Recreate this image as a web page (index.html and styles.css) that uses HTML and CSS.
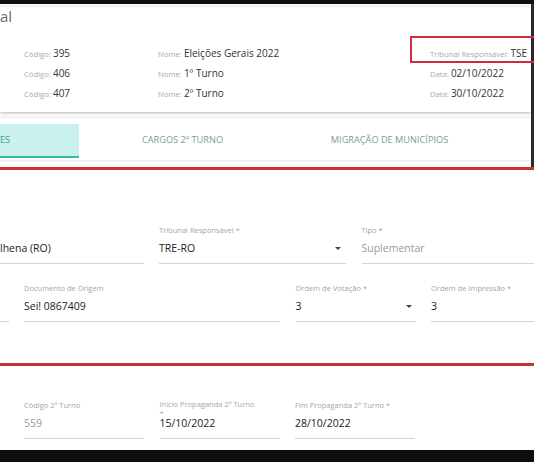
FILE: index.html
```html
<!DOCTYPE html>
<html lang="pt-BR">
<head>
<meta charset="utf-8">
<title>Eleição</title>
<link rel="stylesheet" href="styles.css">
</head>
<body>
<div class="screen">
  <header class="top">
    <section class="summary">
      <h1 class="title">al</h1>
      <div class="srows">
        <div class="srow">
          <div class="sitem"><span class="sl">Código:</span><span class="sv">395</span></div>
          <div class="sitem"><span class="sl">Nome:</span><span class="sv">Eleições Gerais 2022</span></div>
          <div class="sitem marked"><span class="sl">Tribunal Responsável:</span><span class="sv">TSE</span></div>
        </div>
        <div class="srow">
          <div class="sitem"><span class="sl">Código:</span><span class="sv">406</span></div>
          <div class="sitem"><span class="sl">Nome:</span><span class="sv">1º Turno</span></div>
          <div class="sitem"><span class="sl">Data:</span><span class="sv">02/10/2022</span></div>
        </div>
        <div class="srow">
          <div class="sitem"><span class="sl">Código:</span><span class="sv">407</span></div>
          <div class="sitem"><span class="sl">Nome:</span><span class="sv">2º Turno</span></div>
          <div class="sitem"><span class="sl">Data:</span><span class="sv">30/10/2022</span></div>
        </div>
      </div>
    </section>
    <nav class="tabs">
      <div class="tab tab-first active">ES</div>
      <div class="tab">CARGOS 2º TURNO</div>
      <div class="tab">MIGRAÇÃO DE MUNICÍPIOS</div>
    </nav>
  </header>

  <section class="form-box">
    <div class="frow">
      <div class="field w-143">
        <span class="flabel"></span>
        <div class="fvalue">lhena (RO)</div>
      </div>
      <div class="field w-187">
        <span class="flabel">Tribunal Responsável *</span>
        <div class="fvalue">TRE-RO<span class="caret"></span></div>
      </div>
      <div class="field w-200">
        <span class="flabel">Tipo *</span>
        <div class="fvalue muted">Suplementar</div>
      </div>
    </div>
    <div class="frow">
      <div class="field w-8">
        <span class="flabel"></span>
        <div class="fvalue"></div>
      </div>
      <div class="field w-256">
        <span class="flabel">Documento de Origem</span>
        <div class="fvalue">Sei! 0867409</div>
      </div>
      <div class="field w-120">
        <span class="flabel">Ordem de Votação *</span>
        <div class="fvalue">3<span class="caret caret-tight"></span></div>
      </div>
      <div class="field w-120">
        <span class="flabel">Ordem de Impressão *</span>
        <div class="fvalue">3</div>
      </div>
    </div>
  </section>

  <section class="form-plain">
    <div class="frow">
      <div class="field w-120">
        <span class="flabel">Código 2º Turno</span>
        <div class="fvalue muted">559</div>
      </div>
      <div class="field w-120">
        <span class="flabel wrap">Início Propaganda 2º Turno<br>*</span>
        <div class="fvalue">15/10/2022</div>
      </div>
      <div class="field w-120">
        <span class="flabel">Fim Propaganda 2º Turno *</span>
        <div class="fvalue">28/10/2022</div>
      </div>
    </div>
  </section>
</div>
</body>
</html>
```
FILE: styles.css
```css
* {
  box-sizing: border-box;
  margin: 0;
  padding: 0;
}

body {
  margin: 0;
  width: 534px;
  height: 462px;
  overflow: hidden;
  background: #ffffff;
  font-family: "Open Sans", "Liberation Sans", sans-serif;
}

.screen {
  height: 462px;
  border-top: 4px solid #0e0e0e;
  border-bottom: 12px solid #0e0e0e;
  overflow: hidden;
  display: flex;
  flex-direction: column;
}

.top {
  border-right: 3px solid #2b2b2b;
  padding-bottom: 7px;
}

/* summary card */
.summary {
  margin-top: 2px;
  border-top: 1px solid #ececec;
  padding-bottom: 9px;
  box-shadow: 0 1px 3px rgba(0, 0, 0, 0.3);
  background: #fff;
}

.title {
  font-size: 15px;
  line-height: 18px;
  font-weight: 400;
  color: #6a6a6a;
}

.srows {
  margin-top: 18px;
  padding-left: 24px;
}

.srow {
  display: grid;
  grid-template-columns: 134px 272px 1fr;
  height: 20px;
}

.sitem {
  font-size: 10px;
  line-height: 20px;
  white-space: nowrap;
}

.sl {
  font-size: 7.7px;
  line-height: 1;
  color: #a9a9a9;
  margin-right: 2px;
}

.sv {
  font-size: 10px;
  line-height: 1;
  color: #333333;
}

.marked {
  position: relative;
}

.marked::after {
  content: "";
  position: absolute;
  left: -20px;
  right: -12px;
  top: -7px;
  bottom: 0;
  border: 2px solid #cc2f39;
}

/* tabs */
.tabs {
  margin-top: 6px;
  height: 42px;
  padding-top: 6px;
  display: flex;
  background: #fff;
  box-shadow: 0 0 3px rgba(0, 0, 0, 0.2);
}

.tab {
  flex: none;
  width: 207px;
  height: 34px;
  line-height: 32px;
  text-align: center;
  font-size: 9.2px;
  color: #7a9b9b;
  border-bottom: 2px solid transparent;
  white-space: nowrap;
}

.tab-first {
  width: 79px;
  text-align: left;
}

.tab.active {
  background: #c9f2ef;
  color: #3e9e99;
  border-bottom-color: #43b2ac;
}

/* form */
.form-box {
  border-top: 3px solid #c9303a;
  border-bottom: 3px solid #c9303a;
  padding: 55px 0 41px;
}

.form-plain {
  padding-top: 34px;
  padding-left: 24px;
}

.frow {
  display: flex;
  gap: 15.5px;
  white-space: nowrap;
}

.frow + .frow {
  margin-top: 19px;
}

.field {
  flex: none;
  border-bottom: 1px solid #d3d3d3;
  padding-bottom: 7px;
}

.w-8 { width: 8.5px; }
.w-120 { width: 120px; }
.w-143 { width: 143.5px; }
.w-187 { width: 187px; }
.w-200 { width: 200px; }
.w-256 { width: 256px; }

.flabel {
  display: block;
  height: 10px;
  font-size: 7.5px;
  line-height: 10px;
  color: #a6a6a6;
}

.flabel.wrap {
  line-height: 8.5px;
}

.fvalue {
  margin-top: 5px;
  height: 16px;
  display: flex;
  align-items: center;
  justify-content: space-between;
  font-size: 10.5px;
  line-height: 16px;
  color: #222222;
}

.fvalue.muted {
  color: #9a9a9a;
}

.caret {
  width: 0;
  height: 0;
  border-left: 3px solid transparent;
  border-right: 3px solid transparent;
  border-top: 3.5px solid #444;
  margin-right: 5px;
}

.caret-tight {
  margin-right: 4px;
}
```
